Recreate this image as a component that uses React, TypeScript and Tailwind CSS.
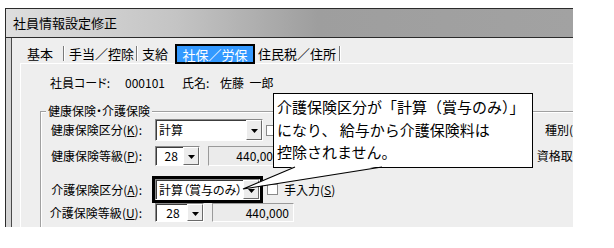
import React from "react";

function Arrow() {
  return (
    <div className="flex w-[16px] shrink-0 items-center justify-center border border-t-white border-l-white border-b-[#6a6a6a] border-r-[#6a6a6a] bg-[#ececec]">
      <svg width="7" height="4" viewBox="0 0 7 4" className="mt-[2px]">
        <path d="M0 0h7L3.5 4z" fill="#000" />
      </svg>
    </div>
  );
}

function Combo({ className, text, center }: { className: string; text: string; center?: boolean }) {
  return (
    <div
      className={`flex border border-t-[#8a8a8a] border-l-[#8a8a8a] border-b-white border-r-white bg-white shadow-[inset_1px_1px_0_#3c3c3c] ${className}`}
    >
      <div
        className={`flex flex-1 items-center overflow-hidden whitespace-nowrap pl-[3px] text-[12px] ${center ? "justify-center" : ""}`}
      >
        {text}
      </div>
      <Arrow />
    </div>
  );
}

function Field({ text }: { text: string }) {
  return (
    <div className="ml-[8px] flex h-full w-[82px] items-center justify-end border border-t-[#9a9a9a] border-l-[#9a9a9a] border-b-white border-r-white bg-[#ebebeb] pr-[4px] text-[12px]">
      {text}
    </div>
  );
}

function Check() {
  return <div className="h-[11px] w-[11px] shrink-0 border border-[#8a8a8a] bg-white" />;
}

function Label({ main, k }: { main: string; k: string }) {
  return (
    <div className="w-[101px] shrink-0 whitespace-nowrap text-right text-[12px]">
      {main}(<span className="underline">{k}</span>):
    </div>
  );
}

function Sep({ className }: { className: string }) {
  return <div className={`h-[15px] w-[2px] border-l border-r border-l-[#7a7a7a] border-r-white ${className}`} />;
}

export default function App() {
  return (
    <div className="relative h-[248px] w-[614px] overflow-hidden bg-white pl-[5px] pt-[8px] font-['Noto_Sans_CJK_JP','Noto_Sans',sans-serif] text-black [font-feature-settings:'palt']">
      {/* window */}
      <div className="h-[219px] w-[568px] overflow-hidden border-l border-t border-[#2b2b2b] bg-[#eeeeee]">
        <div className="flex h-[29px] items-center border-b border-[#2b2b2b] bg-[linear-gradient(90deg,#dedede_0%,#c4c4c4_30%,#9e9e9e_55%,#a2a2a2_100%)] pl-[7px] text-[13px]">
          社員情報設定修正
        </div>

        <div className="flex h-[189px]">
          <div className="w-[6px] shrink-0 border-r border-[#4a4a4a] bg-[#d4d4d4]" />
          <div className="min-w-0 flex-1 pl-[8px]">
            {/* tabs */}
            <div className="mt-[6px] flex h-[19px] items-start whitespace-nowrap text-[13px] leading-[19px]">
              <span className="ml-[7px]">基本</span>
              <Sep className="ml-[10px] mt-[2px]" />
              <span className="ml-[4px]">手当／控除</span>
              <Sep className="ml-[2px] mt-[2px]" />
              <span className="ml-[4px]">支給</span>
              <div className="ml-[7px] flex h-[20px] w-[80px] items-center justify-center border-2 border-black bg-[#3399ff] text-white">
                社保／労保
              </div>
              <span className="ml-[3px]">住民税／住所</span>
              <Sep className="ml-[3px] mt-[2px]" />
            </div>

            {/* tab panel */}
            <div className="h-[164px] border-l border-t border-white">
              <div className="mt-[12px] flex h-[14px] items-center whitespace-nowrap pl-[29px] text-[12px]">
                <span className="w-[75px]">社員コード:</span>
                <span className="w-[57px]">000101</span>
                <span className="w-[38px]">氏名:</span>
                <span>佐藤&nbsp;&nbsp;一郎</span>
              </div>

              {/* group box */}
              <div className="relative ml-[19px] mt-[21px] h-[140px] w-[560px] border-l border-t border-[#a0a0a0] shadow-[inset_1px_1px_0_#ffffff]">
                <div className="absolute -top-[8px] left-[5px] bg-[#eeeeee] px-[2px] text-[12px] leading-[14px]">
                  健康保険・介護保険
                </div>

                <div className="mt-[7px] flex h-[22px] items-center">
                  <Label main="健康保険区分" k="K" />
                  <Combo className="ml-[13px] h-full w-[108px]" text="計算" />
                  <div className="ml-[3px]">
                    <Check />
                  </div>
                  <span className="ml-[268px] whitespace-nowrap text-[12px]">種別(T):</span>
                </div>

                <div className="mt-[5px] flex h-[20px] items-center">
                  <Label main="健康保険等級" k="P" />
                  <Combo className="ml-[13px] h-full w-[49px]" text="28" center />
                  <Field text="440,000" />
                  <span className="ml-[252px] whitespace-nowrap text-[12px]">資格取得日:</span>
                </div>

                <div className="mt-[13px] flex h-[21px] items-center">
                  <Label main="介護保険区分" k="A" />
                  <Combo className="ml-[13px] h-full w-[105px] outline-[3px] outline-black" text="計算（賞与のみ）" />
                  <div className="ml-[7px]">
                    <Check />
                  </div>
                  <span className="ml-[6px] whitespace-nowrap text-[12px]">
                    手入力(<span className="underline">S</span>)
                  </span>
                </div>

                <div className="mt-[3px] flex h-[19px] items-center">
                  <Label main="介護保険等級" k="U" />
                  <Combo className="ml-[13px] h-full w-[49px]" text="28" center />
                  <Field text="440,000" />
                </div>
              </div>
            </div>
          </div>
        </div>
      </div>

      {/* callout */}
      <div className="absolute left-[273px] top-[93px] h-[75px] w-[260px] whitespace-nowrap border border-black bg-white pl-[3px] pt-[2px] text-[15px] leading-[22.5px] [font-feature-settings:normal]">
        <div>介護保険区分が「計算（賞与のみ）」</div>
        <div>になり、 給与から介護保険料は</div>
        <div>控除されません。</div>
      </div>
      <svg className="absolute left-[240px] top-[163px]" width="145" height="30" viewBox="0 0 145 30">
        <polygon points="55,3 142,3 3,26" fill="#fff" />
        <polyline points="55,4 3,26 142,4" fill="none" stroke="#000" strokeWidth="1.2" />
      </svg>
    </div>
  );
}
